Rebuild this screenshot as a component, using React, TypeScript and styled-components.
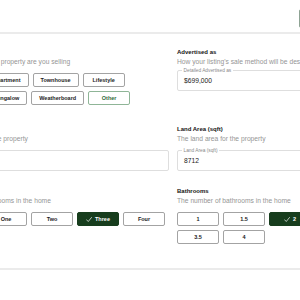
import styled, { createGlobalStyle } from 'styled-components';

const GlobalStyle = createGlobalStyle`
  html, body {
    margin: 0;
    padding: 0;
    background: #ffffff;
  }
  body {
    font-family: 'Liberation Sans', Arial, sans-serif;
    overflow: hidden;
  }
`;

type Variant = 'default' | 'selected' | 'accent';

type Choice = { label: string; variant?: Variant };

const propertyTypes: Choice[] = [
  { label: 'House' },
  { label: 'Apartment' },
  { label: 'Townhouse' },
  { label: 'Lifestyle' },
  { label: 'Unit' },
  { label: 'Bungalow' },
  { label: 'Weatherboard' },
  { label: 'Other', variant: 'accent' },
];

const bedrooms: Choice[] = [
  { label: 'Studio' },
  { label: 'One' },
  { label: 'Two' },
  { label: 'Three', variant: 'selected' },
  { label: 'Four' },
  { label: 'Five+' },
];

const bathrooms: Choice[] = [
  { label: '1' },
  { label: '1.5' },
  { label: '2', variant: 'selected' },
  { label: '2.5' },
  { label: '3' },
  { label: '3.5' },
  { label: '4' },
];

const CheckIcon = () => (
  <svg width="6" height="5" viewBox="0 0 12 10" fill="none">
    <polyline
      points="1,5.5 4.5,9 11,1"
      stroke="currentColor"
      strokeWidth="1.4"
      strokeLinecap="round"
      strokeLinejoin="round"
    />
  </svg>
);

const ChoiceGroup = ({ items }: { items: Choice[] }) => (
  <Choices>
    {items.map((item) => (
      <ChoiceButton key={item.label} $variant={item.variant ?? 'default'}>
        {item.variant === 'selected' && <CheckIcon />}
        {item.label}
      </ChoiceButton>
    ))}
  </Choices>
);

const OutlinedInput = ({
  label,
  value,
  top,
}: {
  label: string;
  value: string;
  top: number;
}) => (
  <InputBox $top={top}>
    <Legend>{label}</Legend>
    <Value>{value}</Value>
  </InputBox>
);

export default function App() {
  return (
    <Page>
      <GlobalStyle />
      <Canvas>
        <Header>
          <HeaderButton>Save draft</HeaderButton>
        </Header>
        <Divider />
        <Row $top={14}>
          <Field>
            <Title>Property type</Title>
            <Hint>Tell us which type of property are you selling</Hint>
            <ChoiceGroup items={propertyTypes} />
          </Field>
          <Field>
            <Title>Advertised as</Title>
            <Hint>How your listing's sale method will be described to buyers</Hint>
            <OutlinedInput top={4} label="Detailed Advertised as" value="$699,000" />
          </Field>
        </Row>
        <Row $top={20}>
          <Field>
            <Title>Floor Area (sqft)</Title>
            <Hint>The floor area for the property</Hint>
            <OutlinedInput top={7} label="Floor Area (sqft)" value="180" />
          </Field>
          <Field>
            <Title>Land Area (sqft)</Title>
            <Hint>The land area for the property</Hint>
            <OutlinedInput top={7} label="Land Area (sqft)" value="8712" />
          </Field>
        </Row>
        <Row $top={16}>
          <Field>
            <Title>Bedrooms</Title>
            <Hint>The number of bedrooms in the home</Hint>
            <ChoiceGroup items={bedrooms} />
          </Field>
          <Field>
            <Title>Bathrooms</Title>
            <Hint>The number of bathrooms in the home</Hint>
            <ChoiceGroup items={bathrooms} />
          </Field>
        </Row>
        <Divider $top={24} />
      </Canvas>
    </Page>
  );
}

const Page = styled.div`
  width: 300px;
  height: 300px;
  overflow: hidden;
  background: #ffffff;
`;

const Canvas = styled.div`
  width: 468px;
  margin-left: -61px;
`;

const Header = styled.div`
  display: flex;
  justify-content: flex-end;
  padding-top: 9px;
  height: 23px;
`;

const HeaderButton = styled.button`
  width: 108px;
  height: 19px;
  border: 1px solid #8ea394;
  border-radius: 2px;
  background: #ffffff;
  color: #1f4a28;
  font-family: inherit;
  font-size: 5.5px;
  font-weight: 700;
`;

const Divider = styled.div<{ $top?: number }>`
  height: 2px;
  margin-top: ${(p) => p.$top ?? 0}px;
  background: #ebebeb;
`;

const Row = styled.div<{ $top: number }>`
  display: grid;
  grid-template-columns: 230px 230px;
  column-gap: 8px;
  margin-top: ${(p) => p.$top}px;
`;

const Field = styled.div`
  display: flex;
  flex-direction: column;
  min-width: 0;
`;

const Title = styled.div`
  font-size: 6px;
  line-height: 8px;
  font-weight: 700;
  color: #141414;
  white-space: nowrap;
`;

const Hint = styled.div`
  margin-top: 2px;
  font-size: 6.7px;
  line-height: 8px;
  color: #959595;
  white-space: nowrap;
`;

const Choices = styled.div`
  display: flex;
  flex-wrap: wrap;
  gap: 4px;
  margin-top: 7px;
`;

const ChoiceButton = styled.button<{ $variant: Variant }>`
  display: flex;
  align-items: center;
  justify-content: center;
  gap: 3px;
  min-width: 42px;
  height: 14px;
  padding: 0 7px;
  box-sizing: border-box;
  border-radius: 2px;
  font-family: inherit;
  font-size: 5.5px;
  font-weight: 700;
  white-space: nowrap;
  border: 1px solid
    ${(p) =>
      p.$variant === 'selected'
        ? '#173d1d'
        : p.$variant === 'accent'
          ? '#8fb597'
          : '#a3a3a3'};
  background: ${(p) => (p.$variant === 'selected' ? '#173d1d' : '#ffffff')};
  color: ${(p) =>
    p.$variant === 'selected'
      ? '#ffffff'
      : p.$variant === 'accent'
        ? '#2f6b3c'
        : '#1c1c1c'};
`;

const InputBox = styled.div<{ $top: number }>`
  position: relative;
  display: flex;
  align-items: center;
  height: 21px;
  margin-top: ${(p) => p.$top}px;
  padding: 0 6px;
  box-sizing: border-box;
  border: 1px solid #dedede;
  border-radius: 2px;
`;

const Legend = styled.span`
  position: absolute;
  top: -3px;
  left: 4px;
  padding: 0 1.5px;
  background: #ffffff;
  font-size: 4.8px;
  line-height: 5px;
  color: #8a8a8a;
  white-space: nowrap;
`;

const Value = styled.span`
  font-size: 6.7px;
  color: #222222;
`;
